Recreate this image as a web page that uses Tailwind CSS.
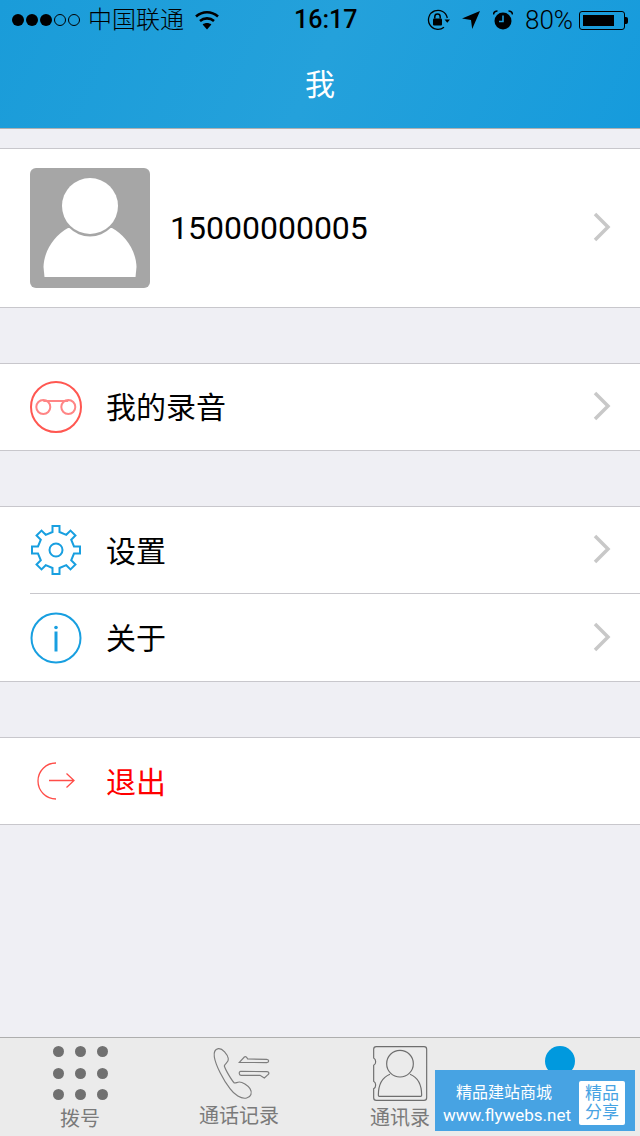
<!DOCTYPE html>
<html lang="zh-CN">
<head>
  <meta charset="UTF-8" />
  <meta name="viewport" content="width=device-width, initial-scale=1.0"/>
  <title>我</title>
  <script src="https://cdn.jsdelivr.net/npm/@tailwindcss/browser@4"></script>
</head>
<body class="[font-family:Roboto,'Noto_Sans_CJK_SC',sans-serif]">
<div class="relative w-[640px] h-[1136px] overflow-hidden flex flex-col bg-[#efeff4]">

  <!-- header -->
  <header class="h-[129px] shrink-0 border-b border-[#aeb0b2] bg-linear-[115deg] from-[#1a9cd9] via-[#24a1db] to-[#169bdc] flex flex-col">
    <div class="h-[40px] flex items-center text-black">
      <div class="flex items-center gap-[2px] ml-[12px]">
        <span class="w-[12px] h-[12px] rounded-full bg-black"></span>
        <span class="w-[12px] h-[12px] rounded-full bg-black"></span>
        <span class="w-[12px] h-[12px] rounded-full bg-black"></span>
        <span class="w-[12px] h-[12px] rounded-full border border-black"></span>
        <span class="w-[12px] h-[12px] rounded-full border border-black"></span>
      </div>
      <span class="ml-[8px] text-[24px] leading-[40px] w-[96px] font-light">中国联通</span>
      <svg class="ml-[10px]" width="26" height="20" viewBox="0 0 26 20" fill="none" stroke="#000" stroke-width="2.6">
        <path d="M2 6.500C8.500 .8 17.500 .8 24 6.500"/>
        <path d="M6 11C10 7.500 16 7.500 20 11"/>
        <path d="M13 19.500L8.600 14.600C11 12.600 15 12.600 17.400 14.600Z" fill="#000" stroke="none"/>
      </svg>
      <span class="ml-[74px] w-[62px] text-[25px] font-medium leading-[40px] text-center">16:17</span>
      <svg class="ml-[71px]" width="24" height="22" viewBox="0 0 24 22" fill="none" stroke="#000" stroke-width="1.300">
        <path d="M20.300 9A9.500 9.500 0 1 0 17 18.200"/>
        <path d="M17.500 10.500h5.500l-2.700 3.200z" fill="#000" stroke="none"/>
        <rect x="6" y="9.500" width="9" height="7" rx="1" fill="#000" stroke="none"/>
        <path d="M7.800 9.500V7.800a2.700 2.700 0 0 1 5.400 0v1.700" stroke-width="1.500"/>
      </svg>
      <svg class="ml-[11px]" width="18" height="18" viewBox="0 0 18 18">
        <path d="M18 0L10.200 18 9 9 0 7.600z" fill="#000"/>
      </svg>
      <svg class="ml-[13px]" width="20" height="20" viewBox="0 0 20 20">
        <circle cx="10" cy="11" r="8.500" fill="#000"/>
        <path d="M10 5.500V11.500H6" fill="none" stroke="#1d9dda" stroke-width="1.600"/>
        <path d="M.5 4.500A4 4 0 0 1 4.500 1M15.500 1A4 4 0 0 1 19.500 4.500" fill="none" stroke="#000" stroke-width="1.600"/>
      </svg>
      <span class="ml-[12px] w-[50px] text-[26px] leading-[40px] font-light whitespace-nowrap">80%</span>
      <div class="ml-[4px] w-[46px] h-[19px] border border-black rounded-[3px] p-[3px]">
        <div class="w-[31px] h-full bg-black"></div>
      </div>
      <div class="w-[3px] h-[7px] bg-black rounded-r-[2px]"></div>
    </div>
    <div class="flex-1 flex items-center justify-center pt-[2px]">
      <h1 class="text-white text-[30px] leading-none font-normal">我</h1>
    </div>
  </header>

  <main class="flex-1 pt-[19px]">
    <!-- profile -->
    <section class="h-[160px] bg-white border-y border-[#c8c7cc] flex items-center pl-[30px] pr-[29px]">
      <div class="w-[120px] h-[120px] rounded-[6px] bg-[#a6a6a6]">
        <svg width="120" height="120" viewBox="0 0 120 120">
          <path d="M14.500 109L13.500 99C14 82 25 67 38 60L82 60C95 67 106 82 106.500 99L105.500 109Z" fill="#fff"/>
          <circle cx="60" cy="39" r="29.500" fill="#a6a6a6"/>
          <circle cx="60" cy="38" r="28" fill="#fff"/>
        </svg>
      </div>
      <span class="ml-[20px] text-[32px] leading-none text-black">15000000005</span>
      <svg class="ml-auto mb-[2px]" width="18" height="30" viewBox="0 0 18 30" fill="none" stroke="#c8c8c8" stroke-width="3.500">
        <path d="M2 2L15 15 2 28"/>
      </svg>
    </section>

    <!-- recordings -->
    <section class="mt-[55px] h-[88px] bg-white border-y border-[#c8c7cc] flex items-center pl-[30px] pr-[29px]">
      <svg width="52" height="52" viewBox="0 0 52 52" fill="none">
        <circle cx="26" cy="26" r="25" stroke="#ff5751" stroke-width="2"/>
        <g stroke="#ff8585" stroke-width="2">
          <circle cx="13.300" cy="26" r="7"/>
          <circle cx="38.300" cy="26" r="7"/>
          <path d="M13.300 20H38.300"/>
        </g>
      </svg>
      <span class="ml-[24px] text-[30px] leading-none text-black pt-[1px]">我的录音</span>
      <svg class="ml-auto mb-[2px]" width="18" height="30" viewBox="0 0 18 30" fill="none" stroke="#c8c8c8" stroke-width="3.500">
        <path d="M2 2L15 15 2 28"/>
      </svg>
    </section>

    <!-- settings, about -->
    <section class="mt-[55px] bg-white border-y border-[#c8c7cc]">
      <div class="h-[86px] flex items-center pl-[30px] pr-[29px]">
        <svg width="52" height="52" viewBox="-26 -26 52 52" fill="none" stroke="#189fe0" stroke-width="2">
          <path d="M-3.500-18V-24H3.500V-18L10.250-15.200 14.500-19.450 19.450-14.500 15.200-10.250 18-3.500H24V3.500H18L15.200 10.250 19.450 14.500 14.500 19.450 10.250 15.200 3.500 18V24H-3.500V18L-10.250 15.200-14.500 19.450-19.450 14.500-15.200 10.250-18 3.500H-24V-3.500H-18L-15.200-10.250-19.450-14.500-14.500-19.450-10.250-15.200Z"/>
          <circle r="6.500"/>
        </svg>
        <span class="ml-[24px] text-[30px] leading-none text-black pt-[3px]">设置</span>
        <svg class="ml-auto mb-[2px]" width="18" height="30" viewBox="0 0 18 30" fill="none" stroke="#c8c8c8" stroke-width="3.500">
          <path d="M2 2L15 15 2 28"/>
        </svg>
      </div>
      <div class="ml-[30px] h-px bg-[#c8c7cc]"></div>
      <div class="h-[87px] flex items-center pl-[30px] pr-[29px]">
        <svg width="52" height="52" viewBox="0 0 52 52" fill="none" stroke="#189fe0" stroke-width="2">
          <circle cx="26" cy="26" r="24.500"/>
          <path d="M26 19.500V39.500" stroke-width="3"/>
          <circle cx="26" cy="15.500" r="1.800" fill="#189fe0" stroke="none"/>
        </svg>
        <span class="ml-[24px] text-[30px] leading-none text-black pt-[3px]">关于</span>
        <svg class="ml-auto mb-[1px]" width="18" height="30" viewBox="0 0 18 30" fill="none" stroke="#c8c8c8" stroke-width="3.500">
          <path d="M2 2L15 15 2 28"/>
        </svg>
      </div>
    </section>

    <!-- logout -->
    <section class="mt-[55px] h-[88px] bg-white border-y border-[#c8c7cc] flex items-center pl-[30px]">
      <svg width="52" height="52" viewBox="0 0 52 52" fill="none" stroke="#ff4d48" stroke-width="1.300">
        <path d="M26 8A18 18 0 0 0 26 44"/>
        <path d="M19 25.500H44M36.500 18.500L44 25.500 36.500 32.500"/>
      </svg>
      <span class="ml-[24px] text-[30px] leading-none text-[#ff0000] pt-[3px]">退出</span>
    </section>
  </main>

  <!-- tab bar -->
  <nav class="h-[99px] shrink-0 grid grid-cols-4 bg-[#ebebeb] border-t border-[#aeaeae] text-[20px] leading-none text-[#7a7a7a]">
    <div class="flex flex-col items-center pt-[8px]">
      <div class="grid grid-cols-3 gap-x-[11px] gap-y-[10.500px]">
        <span class="w-[11px] h-[11px] rounded-full bg-[#707070]"></span>
        <span class="w-[11px] h-[11px] rounded-full bg-[#707070]"></span>
        <span class="w-[11px] h-[11px] rounded-full bg-[#707070]"></span>
        <span class="w-[11px] h-[11px] rounded-full bg-[#707070]"></span>
        <span class="w-[11px] h-[11px] rounded-full bg-[#707070]"></span>
        <span class="w-[11px] h-[11px] rounded-full bg-[#707070]"></span>
        <span class="w-[11px] h-[11px] rounded-full bg-[#707070]"></span>
        <span class="w-[11px] h-[11px] rounded-full bg-[#707070]"></span>
        <span class="w-[11px] h-[11px] rounded-full bg-[#707070]"></span>
      </div>
      <span class="mt-[9px]">拨号</span>
    </div>
    <div class="flex flex-col items-center pt-[4px]">
      <svg class="ml-[5px]" width="75" height="62" viewBox="0 0 225 186" fill="none" stroke="#7d7d7d" stroke-width="3.500">
        <path d="M40 20C30 22 26 32 28 45C32 70 55 115 75 140C88 158 108 172 125 168C138 165 143 152 135 140C128 130 112 120 103 120C96 120 93 124 88 123C80 115 62 85 58 72C60 65 72 60 70 50C68 38 52 18 40 20Z"/>
        <path d="M103 61L118 45C122 42 126 46 128 51L185 52C193 53 193 61 185 62Z"/>
        <path d="M107 88L186 89C193 89 193 95 189 98L178 108L165 100H108C101 100 101 88 107 88Z"/>
      </svg>
      <span class="mt-[2px] mr-[2px]">通话记录</span>
    </div>
    <div class="flex flex-col items-center pt-[4px]">
      <svg width="70" height="62" viewBox="0 0 210 186" fill="none" stroke="#6e6e6e" stroke-width="3.500">
        <path d="M34 14H177C182 14 185 17 185 22V167C185 172 182 175 177 175H34C29 175 26 172 26 167V140C34 136 34 122 26 118V70C34 66 34 52 26 48V22C26 17 29 14 34 14Z"/>
        <circle cx="105" cy="65" r="40"/>
        <path d="M75 97C55 105 40 125 40 160C40 162 41 163 43 163H167C169 163 170 162 170 160C170 125 155 105 135 97"/>
      </svg>
      <span class="mt-[4px]">通讯录</span>
    </div>
    <div class="flex flex-col items-center pt-[8px]">
      <span class="w-[30px] h-[30px] rounded-full bg-[#0099de]"></span>
    </div>
  </nav>

  <!-- watermark overlay -->
  <div class="absolute left-[435px] top-[1070px] w-[200px] h-[61px] pt-[5px] bg-[#47a3e3] flex items-center text-white">
    <div class="w-[144px] mt-[2px] flex flex-col items-center">
      <span class="pr-[6px] text-[16px] leading-[22px]">精品建站商城</span>
      <span class="text-[17px] leading-[22px] whitespace-nowrap">www.flywebs.net</span>
    </div>
    <div class="w-[46px] h-[44px] bg-white rounded-[2px] flex flex-col items-center justify-center text-[#47a3e3] text-[17px] leading-[19px]">
      <span>精品</span>
      <span>分享</span>
    </div>
  </div>
</div>
</body>
</html>
